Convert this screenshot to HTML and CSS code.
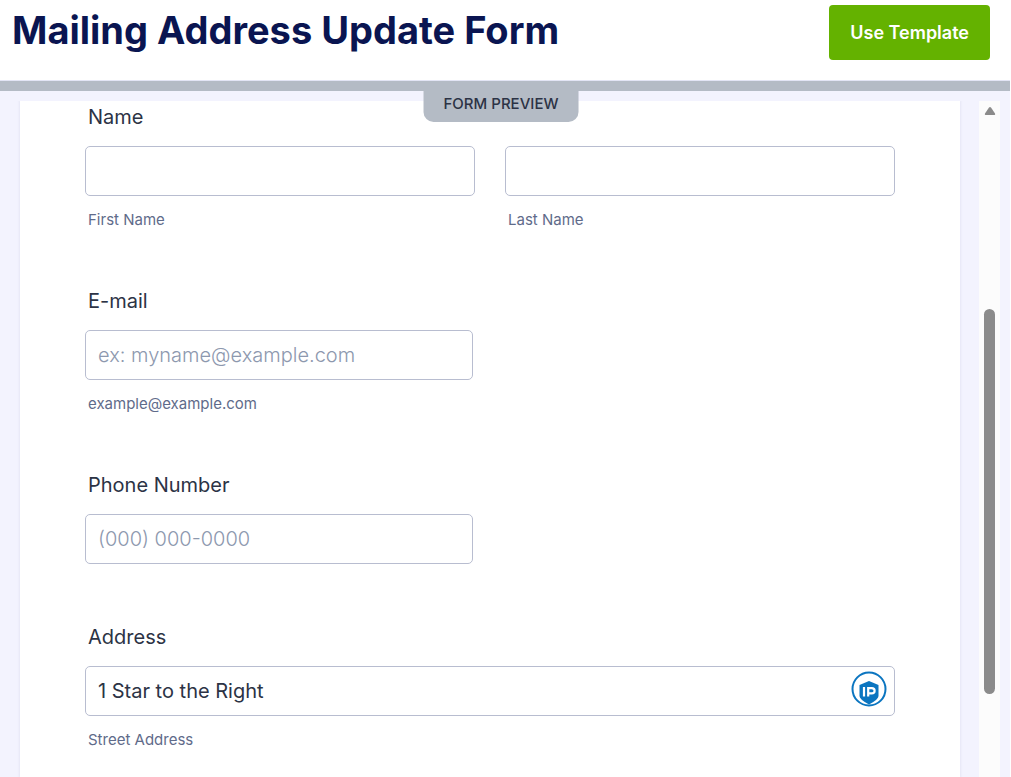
FILE: index.html
```html
<!DOCTYPE html>
<html lang="en">
<head>
<meta charset="utf-8">
<meta name="viewport" content="width=device-width, initial-scale=1">
<title>Mailing Address Update Form</title>
<link rel="stylesheet" href="styles.css">
</head>
<body>
<div class="page">
  <header class="header">
    <h1 class="title">Mailing Address Update Form</h1>
    <button class="use-template" type="button">Use Template</button>
  </header>
  <main class="preview">
    <div class="preview-tag">FORM PREVIEW</div>
    <form class="card">
      <fieldset class="field">
        <legend class="label">Name</legend>
        <div class="columns">
          <div class="column">
            <input class="input" type="text" id="first">
            <label class="sublabel" for="first">First Name</label>
          </div>
          <div class="column">
            <input class="input" type="text" id="last">
            <label class="sublabel" for="last">Last Name</label>
          </div>
        </div>
      </fieldset>
      <div class="field">
        <label class="label" for="email">E-mail</label>
        <input class="input input-short" type="email" id="email" placeholder="ex: myname@example.com" aria-describedby="email-hint">
        <span class="sublabel" id="email-hint">example@example.com</span>
      </div>
      <div class="field">
        <label class="label" for="phone">Phone Number</label>
        <input class="input input-short" type="tel" id="phone" placeholder="(000) 000-0000">
      </div>
      <fieldset class="field">
        <legend class="label">Address</legend>
        <div class="input-wrap">
          <input class="input" type="text" id="street" value="1 Star to the Right">
          <svg class="badge" viewBox="0 0 36 36" aria-hidden="true">
            <circle cx="18" cy="18" r="16.5" fill="#fff" stroke="#0b75c0" stroke-width="2"/>
            <path d="M18 10 27.500 14V25Q27.500 28.500 18 33.500Q8.500 28.500 8.500 25V14Z" fill="#0b75c0"/>
            <path d="M13 16V25.500M17.200 25.500V17.100H20.800Q23.600 17.100 23.600 19.700Q23.600 22.400 20.800 22.400H17.200" fill="none" stroke="#fff" stroke-width="2.200"/>
          </svg>
        </div>
        <label class="sublabel" for="street">Street Address</label>
      </fieldset>
    </form>
    <div class="scrollbar" aria-hidden="true">
      <svg class="arrow" viewBox="0 0 12 8"><path d="M5 .6Q6-.4 7 .6L11 6.500Q11.500 8 10.500 8H1.500Q.5 8 1 6.500Z" fill="#8b8b8b"/></svg>
      <div class="thumb"></div>
    </div>
  </main>
</div>
</body>
</html>
```
FILE: styles.css
```css
* {
  box-sizing: border-box;
}

body {
  margin: 0;
  background: #fff;
  font-family: Inter, "Liberation Sans", sans-serif;
  color: #2c3345;
}

.page {
  display: flex;
  flex-direction: column;
  height: 100vh;
  margin-right: 1px;
  overflow: hidden;
}

.header {
  display: flex;
  flex: none;
  align-items: flex-start;
  justify-content: space-between;
  padding: 5px 20px 20px 12px;
  border-bottom: 1px solid #e3e5f5;
}

.title {
  margin: 0;
  font-size: 38px;
  line-height: 50px;
  font-weight: 700;
  color: #0a1551;
  white-space: nowrap;
}

.use-template {
  height: 55px;
  padding: 0 21px;
  border: 0;
  border-radius: 4px;
  background: #64b200;
  color: #fff;
  font-family: inherit;
  font-size: 18px;
  font-weight: 600;
}

.preview {
  position: relative;
  display: flex;
  flex: 1;
  min-height: 0;
  padding: 10px 10px 0 20px;
  border-top: 10px solid #b4bbc5;
  background: #f3f3fe;
}

.preview-tag {
  position: absolute;
  z-index: 1;
  top: 0;
  left: 50%;
  transform: translateX(-50%);
  padding: 3px 20px 8px;
  margin-left: -4px;
  border-radius: 0 0 10px 10px;
  background: #b4bbc5;
  font-size: 15px;
  line-height: 20px;
  font-weight: 500;
  white-space: nowrap;
}

.card {
  display: flex;
  flex: 1;
  flex-direction: column;
  gap: 61px;
  padding: 4px 65px 0;
  background: #fff;
  box-shadow: 0 0 2px 1px #e6e7f5;
  clip-path: inset(0 -4px 0 -4px);
}

.field {
  display: flex;
  flex: none;
  flex-direction: column;
  min-width: 0;
  margin: 0;
  padding: 0;
  border: 0;
}

.label {
  padding: 0 3px;
  margin-bottom: 17px;
  font-size: 20px;
  line-height: 24px;
}

.columns {
  display: grid;
  grid-template-columns: 1fr 1fr;
  gap: 30px;
}

.column {
  display: flex;
  flex-direction: column;
}

.input {
  width: 100%;
  height: 50px;
  padding: 0 12px;
  border: 1px solid #b8bdd0;
  border-radius: 5px;
  background: #fff;
  color: #2c3345;
  font-family: inherit;
  font-size: 20px;
  font-weight: 400;
}

.input::placeholder {
  color: #8d98ae;
  font-weight: 300;
  opacity: 1;
}

.input-short {
  max-width: 388px;
}

.sublabel {
  margin-top: 15px;
  padding-left: 3px;
  font-size: 15px;
  line-height: 17px;
  color: #5f6b8a;
}

.input-wrap {
  position: relative;
  display: flex;
}

.badge {
  position: absolute;
  top: 5px;
  right: 8px;
  width: 36px;
  height: 36px;
}

.scrollbar {
  display: flex;
  flex: none;
  flex-direction: column;
  align-items: center;
  width: 21px;
  margin-left: 19px;
  background: #fcfcfc;
}

.arrow {
  width: 12px;
  height: 8px;
  margin-top: 6px;
}

.thumb {
  flex: none;
  width: 11px;
  height: 57%;
  margin-top: 194px;
  border-radius: 6px;
  background: #8b8b8b;
}
```
